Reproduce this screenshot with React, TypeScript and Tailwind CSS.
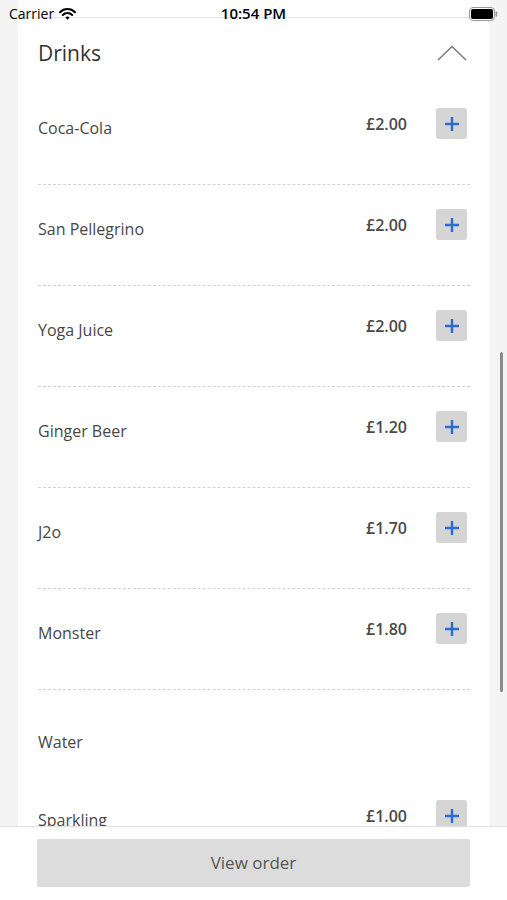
import React from "react";

type Item = { name: string; price: string };

const drinks: Item[] = [
  { name: "Coca-Cola", price: "£2.00" },
  { name: "San Pellegrino", price: "£2.00" },
  { name: "Yoga Juice", price: "£2.00" },
  { name: "Ginger Beer", price: "£1.20" },
  { name: "J2o", price: "£1.70" },
  { name: "Monster", price: "£1.80" },
];

const water: Item[] = [{ name: "Sparkling", price: "£1.00" }];

function PlusButton() {
  return (
    <button
      type="button"
      className="flex h-[31px] w-[31px] shrink-0 items-center justify-center rounded-[3px] bg-[#d5d5d5] mr-[3px]"
    >
      <svg width="16" height="16" viewBox="0 0 16 16">
        <path d="M8 1v14M1 8h14" stroke="#2a6cd4" strokeWidth="2.4" />
      </svg>
    </button>
  );
}

function Row({ item, divider = true }: { item: Item; divider?: boolean }) {
  return (
    <div
      className={`flex h-[101px] shrink-0 items-start pt-[24px] ${
        divider ? "border-b border-dashed border-[#d2d2d2]" : ""
      }`}
    >
      <div className="mt-[9px] flex-1 text-[16px] leading-[22px] text-[#474747]">
        {item.name}
      </div>
      <div className="mt-[5px] mr-[29px] text-[16px] font-semibold leading-[22px] text-[#4a4a4a]">
        {item.price}
      </div>
      <PlusButton />
    </div>
  );
}

function StatusBar() {
  return (
    <div className="absolute inset-x-0 top-0 flex h-[27px] items-center px-[9px] text-[14px] text-black">
      <div className="flex flex-1 items-center gap-[5px]">
        <span>Carrier</span>
        <svg width="17" height="12" viewBox="0 0 17 12">
          <path d="M1 4.2a10.5 10.5 0 0 1 15 0" stroke="#000" strokeWidth="2" fill="none" strokeLinecap="round" />
          <path d="M3.8 7a6.5 6.5 0 0 1 9.4 0" stroke="#000" strokeWidth="2" fill="none" strokeLinecap="round" />
          <path d="M6.4 9.6 8.5 11.8 10.6 9.6a3 3 0 0 0-4.2 0z" fill="#000" />
        </svg>
      </div>
      <div className="text-[15px] font-semibold">10:54 PM</div>
      <div className="flex flex-1 justify-end">
        <svg width="29" height="14" viewBox="0 0 29 14">
          <rect x="0.5" y="0.5" width="25" height="13" rx="3.5" fill="none" stroke="#999" />
          <rect x="2" y="2" width="22" height="10" rx="2" fill="#000" />
          <rect x="26.5" y="4.5" width="1.8" height="5" rx="0.9" fill="#999" />
        </svg>
      </div>
    </div>
  );
}

export default function App() {
  return (
    <div
      className="relative flex h-[900px] w-full flex-col overflow-hidden bg-[#f4f4f4]"
      style={{ fontFamily: '"Open Sans", "Noto Sans", sans-serif' }}
    >
      <div className="flex flex-1 flex-col overflow-hidden pl-[18px] pr-[17px]">
        <div className="flex flex-col bg-white">
          <div className="h-[17px] shrink-0" />
          <div className="h-px shrink-0 bg-[#e3e3e3]" />
          <div className="flex flex-col px-5">
            <div className="flex h-[66px] shrink-0 items-center pt-[4px]">
              <h2 className="flex-1 text-[21px] leading-[28px] text-[#333]">Drinks</h2>
              <svg width="30" height="16" viewBox="0 0 30 16" className="mr-[3px]">
                <path d="M1 15 15 1.5 29 15" stroke="#7a7a7a" strokeWidth="1.5" fill="none" />
              </svg>
            </div>
            {drinks.map((d) => (
              <Row key={d.name} item={d} />
            ))}
            <div className="flex h-[86px] shrink-0 items-start pt-[41px]">
              <div className="text-[16px] leading-[22px] text-[#474747]">Water</div>
            </div>
            {water.map((d) => (
              <Row key={d.name} item={d} divider={false} />
            ))}
          </div>
        </div>
      </div>

      <div className="flex h-[74px] shrink-0 flex-col border-t border-[#e0e0e0] bg-white px-[37px] pt-[12px]">
        <button
          type="button"
          className="h-[48px] w-full rounded-[2px] bg-[#dcdcdc] text-[17px] text-[#555]"
        >
          View order
        </button>
      </div>

      <div className="absolute right-[4px] top-[352px] h-[340px] w-[3px] rounded-full bg-[#8a8a8a]" />
      <StatusBar />
    </div>
  );
}
